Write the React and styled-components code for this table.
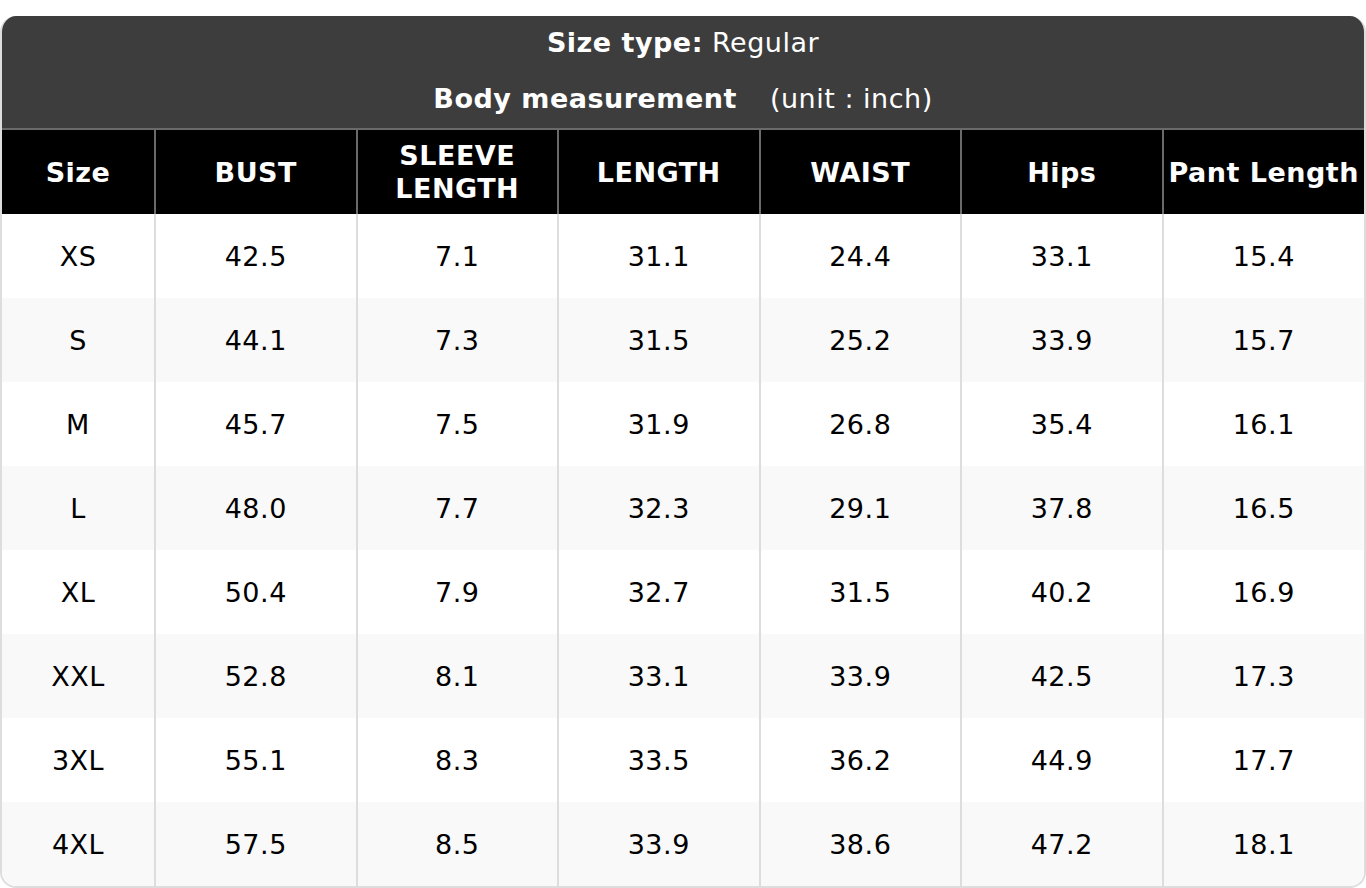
import React from "react";
import styled, { createGlobalStyle } from "styled-components";

const GlobalStyle = createGlobalStyle`
  body {
    margin: 0;
    padding-top: 16px;
    background: #fff;
    font-family: "DejaVu Sans", "Liberation Sans", sans-serif;
    letter-spacing: 0.5px;
  }
`;

const columns = ["Size", "BUST", "SLEEVE LENGTH", "LENGTH", "WAIST", "Hips", "Pant Length"];

const rows = [
  ["XS", "42.5", "7.1", "31.1", "24.4", "33.1", "15.4"],
  ["S", "44.1", "7.3", "31.5", "25.2", "33.9", "15.7"],
  ["M", "45.7", "7.5", "31.9", "26.8", "35.4", "16.1"],
  ["L", "48.0", "7.7", "32.3", "29.1", "37.8", "16.5"],
  ["XL", "50.4", "7.9", "32.7", "31.5", "40.2", "16.9"],
  ["XXL", "52.8", "8.1", "33.1", "33.9", "42.5", "17.3"],
  ["3XL", "55.1", "8.3", "33.5", "36.2", "44.9", "17.7"],
  ["4XL", "57.5", "8.5", "33.9", "38.6", "47.2", "18.1"],
];

const Card = styled.div`
  width: 1366px;
  box-sizing: border-box;
  border-radius: 16px;
  overflow: hidden;
  border: 2px solid #dddddd;
  border-top: none;
`;

const TitleBar = styled.div`
  background: #3d3d3d;
  color: #fff;
  padding: 7px 0 9px;
  display: flex;
  flex-direction: column;
  gap: 16px;
  text-align: center;
  font-size: 27px;
`;

const TitleLine = styled.div`
  line-height: 40px;
  height: 40px;
`;

const Strong = styled.b`
  font-weight: bold;
`;

const Unit = styled.span`
  margin-left: 33px;
`;

const Table = styled.table`
  width: 100%;
  border-collapse: collapse;
  table-layout: fixed;
  font-size: 27px;
`;

const HeadCell = styled.th`
  background: #000;
  color: #fff;
  font-weight: bold;
  height: 84px;
  padding: 0 4px;
  line-height: 33px;
  border-top: 2px solid #6a6a6a;
  border-left: 2px solid #6a6a6a;
  width: ${(p) => (p.$narrow ? "144px" : "auto")};
  &:first-child {
    border-left: none;
  }
`;

const Row = styled.tr`
  background: ${(p) => (p.$alt ? "#f9f9f9" : "#ffffff")};
`;

const Cell = styled.td`
  height: 84px;
  padding: 0;
  text-align: center;
  color: #000;
  border-left: 2px solid #dddddd;
  &:first-child {
    border-left: none;
  }
`;

const Break = ({ text }) => {
  const parts = text.split(" ");
  if (text !== "SLEEVE LENGTH") return text;
  return (
    <>
      {parts[0]}
      <br />
      {parts[1]}
    </>
  );
};

export default function App() {
  return (
    <>
      <GlobalStyle />
      <Card>
        <TitleBar>
          <TitleLine>
            <Strong>Size type:</Strong> Regular
          </TitleLine>
          <TitleLine>
            <Strong>Body measurement</Strong>
            <Unit>(unit : inch)</Unit>
          </TitleLine>
        </TitleBar>
        <Table>
          <thead>
            <tr>
              {columns.map((c, i) => (
                <HeadCell key={c} $narrow={i === 0}>
                  <Break text={c} />
                </HeadCell>
              ))}
            </tr>
          </thead>
          <tbody>
            {rows.map((r, i) => (
              <Row key={r[0]} $alt={i % 2 === 1}>
                {r.map((v, j) => (
                  <Cell key={j}>{v}</Cell>
                ))}
              </Row>
            ))}
          </tbody>
        </Table>
      </Card>
    </>
  );
}
